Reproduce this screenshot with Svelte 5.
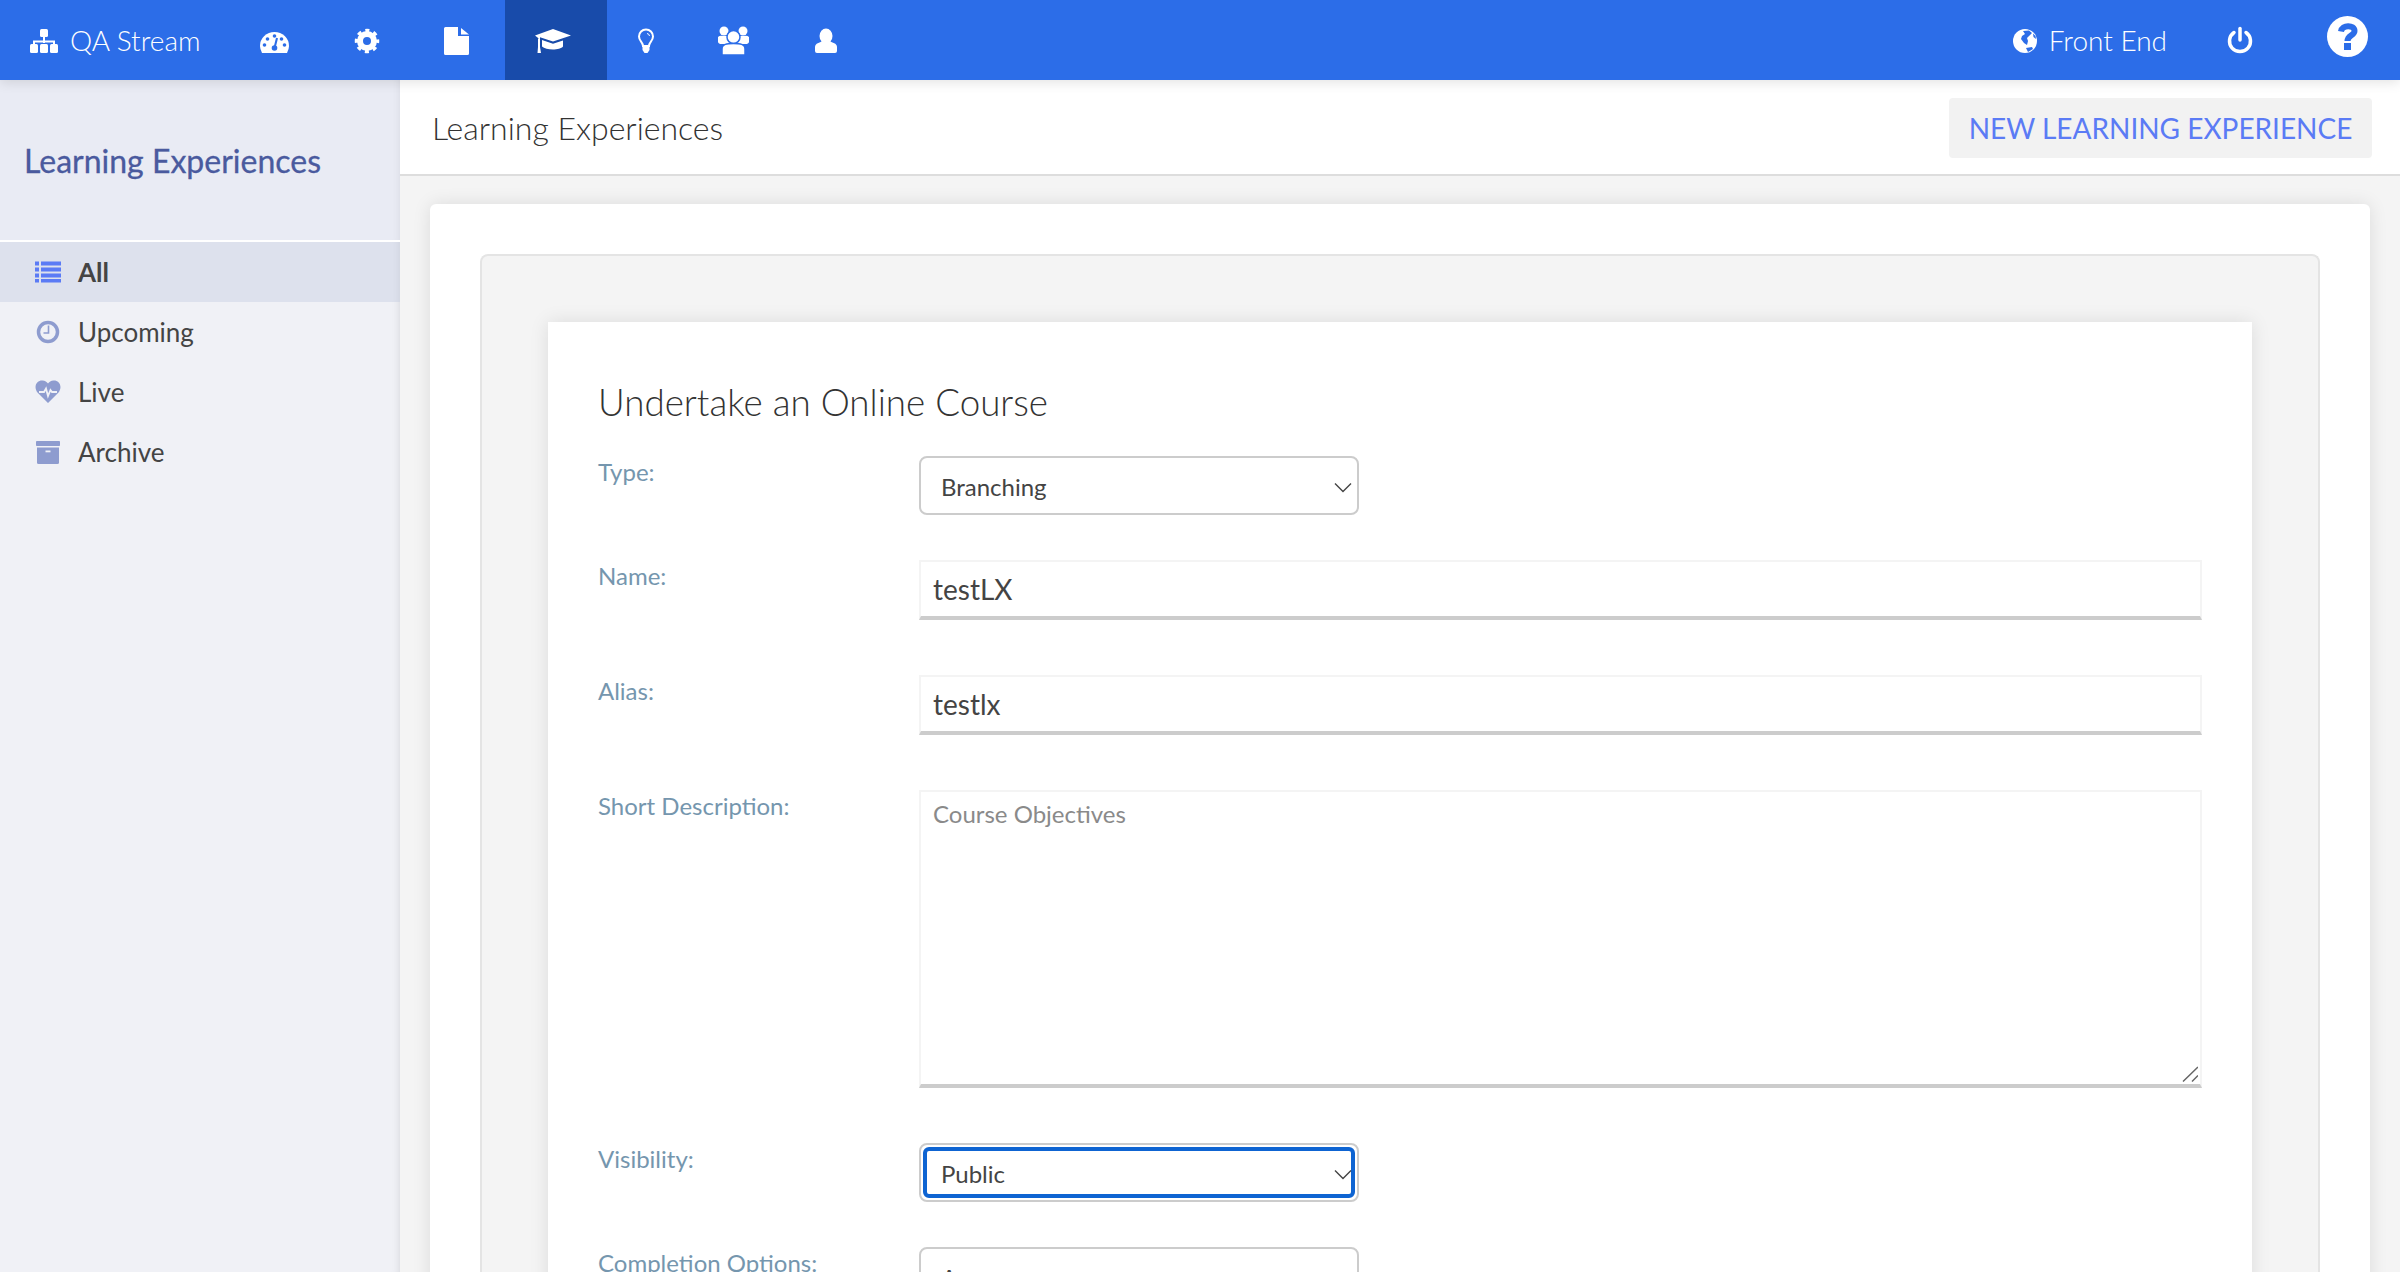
<script>
  const menu = [
    { label: 'All', kind: 'list', active: true },
    { label: 'Upcoming', kind: 'clock' },
    { label: 'Live', kind: 'heart' },
    { label: 'Archive', kind: 'archive' }
  ];
</script>

<div class="page">
  <header class="nav">
    <div class="item brand">
      <svg width="30" height="40" viewBox="30 20 30 40" aria-hidden="true">
        <rect x="40" y="29" width="8" height="8" rx="1.5" />
        <path class="line" d="M44 36v7M34 45v-3.500h20V45" />
        <rect x="30" y="44" width="8" height="9" rx="1.500" />
        <rect x="40" y="44" width="8" height="9" rx="1.500" />
        <rect x="50" y="44" width="8" height="9" rx="1.500" />
      </svg>
      <span>QA Stream</span>
    </div>
    <div class="item">
      <svg width="34" height="40" viewBox="260 20 34 40" aria-hidden="true">
        <path d="M262 53Q260 49 260 46A14.500 14 0 0 1 289 46Q289 49 287 53Z" />
        <g class="hole">
          <circle cx="274.500" cy="36" r="1.800" /><circle cx="267.500" cy="39" r="1.800" /><circle cx="281.500" cy="39" r="1.800" />
          <circle cx="264.500" cy="45" r="1.800" /><circle cx="284.500" cy="45" r="1.800" /><circle cx="274.500" cy="48" r="2.800" />
          <path class="hole-line" d="M274.500 48L277 38" />
        </g>
      </svg>
    </div>
    <div class="item">
      <svg width="30" height="40" viewBox="354 20 30 40" aria-hidden="true">
        <circle class="ring" cx="367" cy="41" r="7" />
        <circle class="teeth" cx="367" cy="41" r="10.500" />
      </svg>
    </div>
    <div class="item">
      <svg width="31" height="40" viewBox="444 20 31 40" aria-hidden="true">
        <path d="M445.500 27H458V36H469V53.500Q469 55 467.500 55H445.500Q444 55 444 53.500V28.500Q444 27 445.500 27Z" />
        <path d="M461 28L469 34.500H461Z" />
      </svg>
    </div>
    <div class="item current">
      <svg width="42" height="40" viewBox="535 20 42 40" aria-hidden="true">
        <path d="M553 29L571 35.500L553 41.500L540 37.300V39.500L535 35.500Z" />
        <path d="M542 40L553 43.800L563 40.500V46.500C560 50.500 546 50.500 542 46.500Z" />
        <path d="M538 38.500H540V47L541 53H537.500L538 47Z" />
      </svg>
    </div>
    <div class="item">
      <svg width="20" height="40" viewBox="636 20 20 40" aria-hidden="true">
        <path class="line" d="M642 46C642 42 638 41 638 36.500A7 7 0 0 1 652 36.500C652 41 648 42 648 46Z" />
        <path d="M641.500 45.500H648.500V50L646.500 53H643.500L641.500 50Z" />
        <path class="thin" d="M646 33.500Q648.300 33.800 648.500 36" />
      </svg>
    </div>
    <div class="item">
      <svg width="34" height="40" viewBox="717 20 34 40" aria-hidden="true">
        <circle cx="724" cy="31" r="4.500" /><circle cx="743" cy="31" r="4.500" />
        <path d="M718 37Q720 35 723 36H744Q747 35 749 37V42Q749 43 747 44H720Q718 43 718 42Z" />
        <circle class="cut" cx="733.500" cy="37" r="6.500" />
        <path class="cut" d="M722 55V49C722 44 727 43.500 733.500 43.500S745 44 745 49V55Z" />
      </svg>
    </div>
    <div class="item">
      <svg width="30" height="40" viewBox="811 20 30 40" aria-hidden="true">
        <ellipse cx="826" cy="36" rx="6.500" ry="7.500" />
        <path d="M815 51V47C815 43 820 43 822 41H830C832 43 837 43 837 47V51Q837 53 835 53H817Q815 53 815 51Z" />
      </svg>
    </div>

    <div class="side">
      <div class="item slim">
        <svg width="26" height="40" viewBox="2013 20 26 40" aria-hidden="true">
          <circle cx="2026" cy="41" r="12" />
          <path class="hole" d="M2024 31L2030 30.500L2033 33L2030 36L2028 38L2029 41L2028 45L2025 43L2022 39L2023 36L2026 34Z" />
          <path class="hole" d="M2027 48L2033 47L2034 49L2029 52Z" />
          <path class="hole" d="M2034 33.500L2036.500 36L2037 39L2034.500 37Z" />
        </svg>
        <span>Front End</span>
      </div>
      <div class="item power">
        <svg width="26" height="40" viewBox="2227 20 26 40" aria-hidden="true">
          <path class="power-arc" d="M2234 32.500A10.500 10.500 0 1 0 2246 32.500" />
          <path class="power-arc" d="M2240 28.500V40" />
        </svg>
      </div>
      <div class="item help">
        <svg width="42" height="42" viewBox="2327 16 42 42" aria-hidden="true">
          <circle cx="2347.500" cy="36.500" r="20.500" />
          <path class="q" d="M2341 31.500C2342 24.500 2354.500 24.500 2354.500 31C2354.500 35.500 2347.500 35 2347.500 41" />
          <rect class="hole" x="2344" y="43" width="7" height="7" />
        </svg>
      </div>
    </div>
  </header>

  <div class="body">
    <aside class="sidebar">
      <div class="side-head">Learning Experiences</div>
      <ul>
        {#each menu as m}
          <li class:on={m.active}>
            <svg width="26" height="26" viewBox="0 0 26 26" aria-hidden="true">
              {#if m.kind === 'list'}
                <path d="M0 2.500h4v4h-4zM6 2.500h20v4h-20zM0 8.500h4v4h-4zM6 8.500h20v4h-20zM0 14.500h4v4h-4zM6 14.500h20v4h-20zM0 20h4v3.500h-4zM6 20h20v3.500h-20z" />
              {:else if m.kind === 'clock'}
                <circle class="clock" cx="13" cy="13" r="9.500" />
                <path class="hand" d="M13.500 6.500V14H8.500" />
              {:else if m.kind === 'heart'}
                <path d="M13 24L2 13C-2 6 3 1 7.500 1.500C10 1.700 12 3 13 4.500C14 3 16 1.700 18.500 1.500C23 1 28 6 24 13Z" />
                <path class="pulse" d="M4 13H9L11 9.500L13 17L15.500 11L17 13H22" />
              {:else}
                <rect x="1" y="2" width="24" height="5" rx="0.800" />
                <path d="M2 8.500H24V23.500Q24 25 22.500 25H3.500Q2 25 2 23.500Z" />
                <rect class="slot" x="10.500" y="11.500" width="5" height="1.800" />
              {/if}
            </svg>
            <span>{m.label}</span>
          </li>
        {/each}
      </ul>
    </aside>

    <main class="main">
      <div class="topbar">
        <h1>Learning Experiences</h1>
        <button type="button">NEW LEARNING EXPERIENCE</button>
      </div>
      <section class="card">
        <div class="panel">
          <div class="form">
            <h2>Undertake an Online Course</h2>

            <div class="row select-row">
              <label for="type">Type:</label>
              <div class="select">
                <select id="type"><option>Branching</option></select>
                <svg width="18" height="11" viewBox="0 0 18 11" aria-hidden="true"><path d="M1 1.500L9 9.500L17 1.500" /></svg>
              </div>
            </div>

            <div class="row">
              <label for="name">Name:</label>
              <input id="name" value="testLX" />
            </div>

            <div class="row">
              <label for="alias">Alias:</label>
              <input id="alias" value="testlx" />
            </div>

            <div class="row">
              <label for="desc">Short Description:</label>
              <div class="area">
                <textarea id="desc" placeholder="Course Objectives"></textarea>
                <svg width="16" height="16" viewBox="0 0 16 16" aria-hidden="true"><path d="M1 15.500L16 1M10 15.500L16 9.500" /></svg>
              </div>
            </div>

            <div class="row select-row">
              <label for="vis">Visibility:</label>
              <div class="select focused">
                <select id="vis"><option>Public</option></select>
                <svg width="18" height="11" viewBox="0 0 18 11" aria-hidden="true"><path d="M1 1.500L9 9.500L17 1.500" /></svg>
              </div>
            </div>

            <div class="row select-row">
              <label for="comp">Completion Options:</label>
              <div class="select">
                <select id="comp"><option>Any</option></select>
                <svg width="18" height="11" viewBox="0 0 18 11" aria-hidden="true"><path d="M1 1.500L9 9.500L17 1.500" /></svg>
              </div>
            </div>
          </div>
        </div>
      </section>
    </main>
  </div>
</div>

<style>
  :global(body) {
    margin: 0;
    font-family: Lato, "Liberation Sans", sans-serif;
    color: #444;
  }
  .page {
    height: 1272px;
    overflow: hidden;
    display: flex;
    flex-direction: column;
  }
  .nav {
    height: 80px;
    flex: none;
    display: flex;
    background: #2c6de8;
    color: #fff;
    position: relative;
    z-index: 2;
    box-shadow: 0 2px 12px rgba(0, 0, 0, 0.12);
  }
  .nav svg {
    display: block;
    fill: #fff;
  }
  .item {
    display: flex;
    align-items: center;
    padding: 0 30px;
    font-size: 28px;
    font-weight: 300;
  }
  .item span {
    white-space: nowrap;
  }
  .brand {
    gap: 10px;
  }
  .brand span {
    width: 130px;
  }
  .current {
    background: #184baa;
  }
  .line {
    fill: none;
    stroke: #fff;
    stroke-width: 2;
  }
  .thin {
    fill: none;
    stroke: #fff;
    stroke-width: 1;
  }
  .nav .hole {
    fill: #2c6de8;
  }
  .hole-line {
    fill: none;
    stroke: #2c6de8;
    stroke-width: 2;
  }
  .ring {
    fill: none;
    stroke: #fff;
    stroke-width: 6;
  }
  .teeth {
    fill: none;
    stroke: #fff;
    stroke-width: 3.500;
    stroke-dasharray: 4 4.247;
    stroke-dashoffset: 2;
  }
  .nav .cut {
    stroke: #2c6de8;
    stroke-width: 1.500;
  }
  .side {
    margin-left: auto;
    display: flex;
    align-items: stretch;
  }
  .slim {
    padding: 0;
    gap: 11px;
  }
  .power {
    padding: 0 0 0 60px;
  }
  .help {
    padding: 0 31px 7px 74px;
  }
  .power-arc {
    fill: none;
    stroke: #fff;
    stroke-width: 3.500;
    stroke-linecap: round;
  }
  .q {
    fill: none;
    stroke: #2c6de8;
    stroke-width: 6;
  }
  .body {
    flex: 1;
    display: flex;
    min-height: 0;
  }
  .sidebar {
    width: 400px;
    flex: none;
    background: #f0f1f6;
    box-shadow: inset -8px 0 8px -8px rgba(0, 0, 0, 0.12);
  }
  .side-head {
    height: 98px;
    padding: 62px 0 0 24px;
    line-height: 38px;
    font-size: 32px;
    color: #4a5a9e;
    -webkit-text-stroke: 0.3px #4a5a9e;
    background: #e9ebf4;
    border-bottom: 2px solid #fff;
    box-shadow: inset -8px 0 8px -8px rgba(0, 0, 0, 0.08);
  }
  ul {
    list-style: none;
    margin: 0;
    padding: 0;
  }
  li {
    height: 60px;
    display: flex;
    align-items: center;
    padding-left: 35px;
    gap: 17px;
    font-size: 26px;
    color: #444;
  }
  li svg {
    flex: none;
    display: block;
    fill: #8e9ccf;
  }
  li.on {
    background: #dde1ed;
    font-weight: 700;
    box-shadow: inset -8px 0 8px -8px rgba(0, 0, 0, 0.08);
  }
  li.on svg {
    fill: #5b7bf5;
  }
  .clock {
    fill: none;
    stroke: #8e9ccf;
    stroke-width: 3.500;
  }
  .hand {
    fill: none;
    stroke: #8e9ccf;
    stroke-width: 1.600;
  }
  .pulse {
    fill: none;
    stroke: #f0f1f6;
    stroke-width: 1.800;
  }
  .slot {
    fill: #f0f1f6;
  }
  .main {
    flex: 1;
    min-width: 0;
    background: #f4f4f4;
  }
  .topbar {
    height: 94px;
    background: #fff;
    border-bottom: 2px solid #ddd;
    display: flex;
    align-items: center;
    justify-content: space-between;
    padding: 0 28px 0 32px;
  }
  h1 {
    margin: 0;
    font-size: 32px;
    font-weight: 300;
    color: #333;
  }
  button {
    height: 60px;
    width: 423px;
    margin-top: 2px;
    border: 0;
    border-radius: 4px;
    background: #f2f2f2;
    color: #5b7bf5;
    font: 400 28px Lato, "Liberation Sans", sans-serif;
    padding: 0;
  }
  .card {
    margin: 28px 30px 0;
    background: #fff;
    border-radius: 6px 6px 0 0;
    padding: 50px 50px 0;
    box-shadow: 0 0 18px rgba(0, 0, 0, 0.1);
  }
  .panel {
    background: #f4f4f4;
    border: 2px solid #e4e4e4;
    border-bottom: 0;
    border-radius: 8px 8px 0 0;
    padding: 66px 66px 0;
  }
  .form {
    background: #fff;
    padding: 57px 50px 60px;
    box-shadow: 0 0 18px rgba(0, 0, 0, 0.1);
  }
  h2 {
    margin: 0 0 31px;
    font-size: 36.750px;
    line-height: 46px;
    font-weight: 300;
    color: #333;
  }
  .row {
    display: grid;
    grid-template-columns: 321px 1fr;
    margin-bottom: 55px;
  }
  .select-row {
    margin-bottom: 45px;
  }
  label {
    padding-top: 1px;
    font-size: 24px;
    line-height: 30px;
    color: #7596ae;
  }
  input,
  textarea {
    display: block;
    width: 100%;
    box-sizing: border-box;
    margin: 0;
    background: #fff;
    border: 2px solid #f4f4f4;
    border-bottom: 4px solid #ccc;
    border-radius: 0;
    color: #444;
    outline: 0;
    font-family: Lato, "Liberation Sans", sans-serif;
  }
  input {
    height: 60px;
    padding: 0 12px;
    font-size: 28px;
  }
  .area {
    position: relative;
  }
  .area svg {
    position: absolute;
    right: 4px;
    bottom: 6px;
    fill: none;
    stroke: #666;
    stroke-width: 1.500;
    pointer-events: none;
  }
  textarea {
    height: 298px;
    padding: 7px 12px;
    font-size: 24px;
    line-height: 30px;
    resize: none;
  }
  textarea::placeholder {
    color: #8a8a8a;
    opacity: 1;
  }
  .select {
    position: relative;
    width: 440px;
    height: 59px;
    box-sizing: border-box;
    border: 2px solid #ccc;
    border-radius: 8px;
    background: #fff;
  }
  .select select {
    appearance: none;
    display: block;
    width: 100%;
    height: 100%;
    border: 0;
    background: transparent;
    padding: 1px 0 0 20px;
    margin: 0;
    font: 400 24px Lato, "Liberation Sans", sans-serif;
    color: #444;
    outline: 0;
  }
  .select svg {
    position: absolute;
    right: 5px;
    top: 24px;
    fill: none;
    stroke: #444;
    stroke-width: 1.400;
    pointer-events: none;
  }
  .focused {
    padding: 2px;
  }
  .focused select {
    border: 4px solid #0e64d2;
    border-radius: 6px;
    box-sizing: border-box;
    padding-left: 14px;
  }
</style>
